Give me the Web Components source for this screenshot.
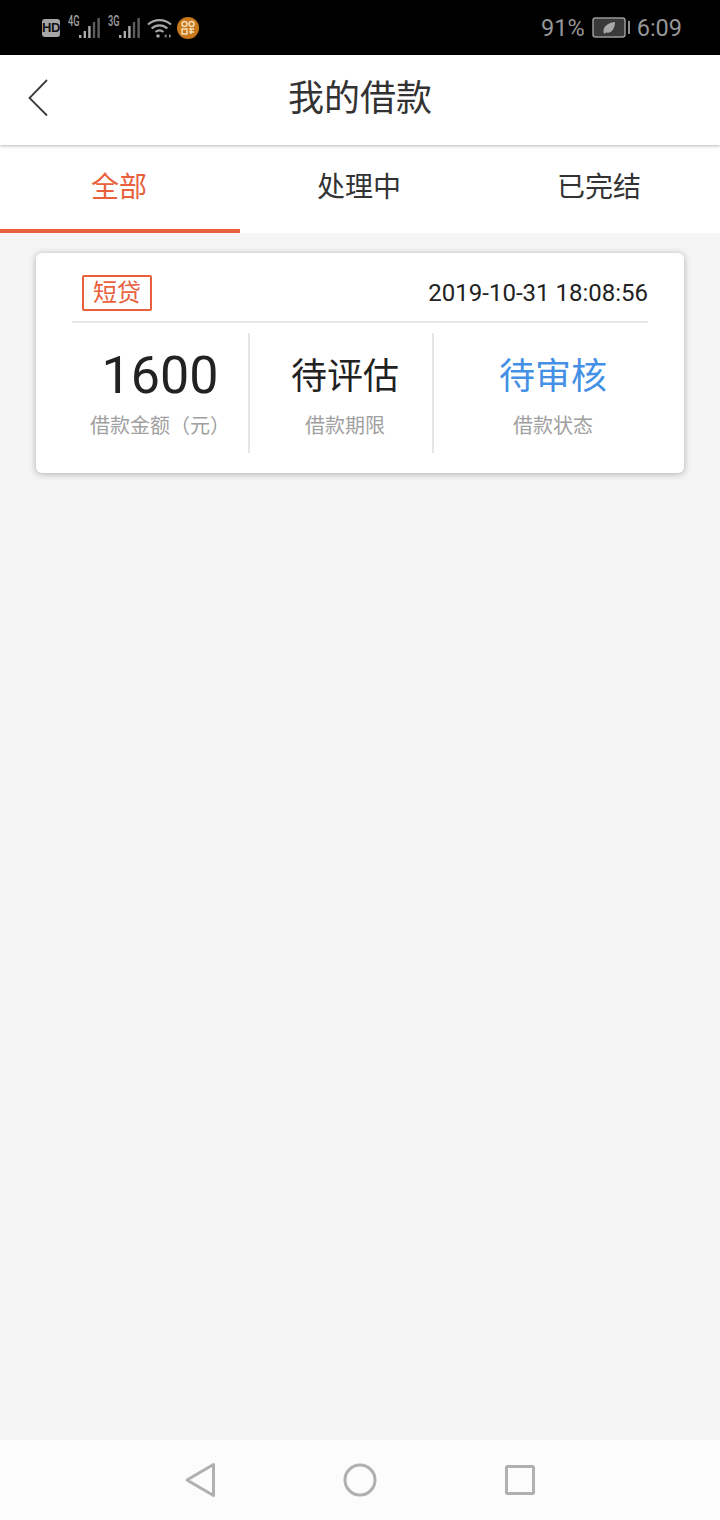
<!DOCTYPE html>
<html lang="zh"><head><meta charset="utf-8"><style>
html,body{margin:0;padding:0;background:#f5f5f5}
body{width:720px;height:1520px;font-family:Roboto,"Noto Sans CJK SC",sans-serif}
</style></head><body>
<app-screen></app-screen>
<script>
function def(name, html){
  customElements.define(name, class extends HTMLElement{
    constructor(){super();this.attachShadow({mode:'open'}).innerHTML=html;}
  });
}
const CJK='Roboto,"Noto Sans CJK SC",sans-serif';
function bars(){return `<svg width="21" height="20" viewBox="0 0 21 20"><g fill="#ababab"><rect x="0" y="17" width="2.400" height="3"/><rect x="4.600" y="13" width="2.400" height="7"/><rect x="9.200" y="8" width="2.400" height="12"/></g><g fill="#5c5c5c"><rect x="13.800" y="4" width="2.400" height="16"/><rect x="18.400" y="0" width="2.400" height="20"/></g></svg>`;}
def('status-bar',`<style>
:host{display:flex;height:55px;background:#000;color:#999;align-items:center;justify-content:space-between;padding:0 38px 0 42px;box-sizing:border-box;font-family:${CJK}}
.l,.r{display:flex;align-items:center}
.hd{width:18px;height:18px;background:#a6a6a6;border-radius:3px;color:#111;font:700 13px/18px "Liberation Sans",sans-serif;text-align:center;margin-top:1px;letter-spacing:-.5px}
.sig{position:relative;width:33px;height:24px;margin-left:8px}
.sig span{font:500 14px/12px Roboto,sans-serif;color:#a0a0a0;position:absolute;left:0;top:-1px;transform:scaleX(.66);transform-origin:left}
.sig svg{position:absolute;left:11px;top:2px}
.sig.b{margin-left:7px}
.wifi{margin-left:6px;margin-top:1px}
.coin{width:22px;height:22px;border-radius:50%;background:#c9781a;margin-left:5px;margin-top:1px;display:flex;align-items:center;justify-content:center}
.t{font-size:23.500px;line-height:28px;color:#969696}
.batt{margin:0 7px}
</style>
<div class="l"><div class="hd">HD</div>
<div class="sig"><span>4G</span>${bars()}</div>
<div class="sig b"><span>3G</span>${bars()}</div>
<svg class="wifi" width="25" height="21" viewBox="0 0 25 21" fill="none" stroke="#a8a8a8" stroke-width="2.200"><path d="M1 6.500C7.500 .6 17.500 .6 24 6.500"/><path d="M4.600 10.500C9.300 6.300 15.700 6.300 20.400 10.500"/><path d="M8.500 14C11 12 14 12 16.500 14"/><circle cx="11" cy="18" r="1.800" fill="#a8a8a8" stroke="none"/><path d="M17 18l2.500-2v4zM24.500 18l-2.500-2v4z" fill="#888" stroke="none"/></svg>
<div class="coin"><svg width="16" height="16" viewBox="0 0 16 16" fill="none" stroke="#f3dcb8" stroke-width="1.500"><circle cx="4.500" cy="4" r="2.500"/><circle cx="11.500" cy="4" r="2.500"/><path d="M2 9h5v5H2zM9 9h5M9 12h5M11 9v5"/></svg></div></div>
<div class="r"><span class="t">91%</span>
<svg class="batt" width="38" height="22" viewBox="0 0 38 22"><rect x="1" y="1" width="32" height="19" rx="2.500" fill="#3a3a3a" stroke="#9a9a9a" stroke-width="1.500"/><rect x="36" y="4" width="2" height="13" fill="#8c8c8c"/><path d="M12 17C10 11 14 6 23 5C23 12 19 17 14 15.500Z" fill="#a8a8a8"/></svg>
<span class="t">6:09</span></div>`);
def('app-header',`<style>
:host{display:flex;position:relative;z-index:1;height:90px;background:#fff;align-items:center;justify-content:center;box-shadow:0 1px 3px rgba(0,0,0,.28);font-family:${CJK}}
svg{position:absolute;left:28px;top:24px}
h1{margin:0;font-weight:400;font-size:36px;line-height:84px;height:86px;color:#333}
</style>
<svg width="20" height="38" viewBox="0 0 20 38" fill="none" stroke="#3c3c3c" stroke-width="1.800"><path d="M19 1L1.500 19L19 36.500"/></svg><h1><slot></slot></h1>`);
def('tab-bar',`<style>:host{display:flex;height:88px;background:#fff}</style><slot></slot>`);
def('tab-item',`<style>
:host{display:block;flex:1;box-sizing:border-box;height:88px;padding-right:2px;text-align:center;font:400 28px/86px ${CJK};color:#333}
:host([active]){color:#e8603c;border-bottom:4px solid #e8603c}
</style><slot></slot>`);
def('loan-card',`<style>
:host{display:block;margin:20px 36px 0;height:220px;background:#fff;border-radius:6px;box-shadow:0 1px 7px rgba(0,0,0,.3);box-sizing:border-box;padding:0 36px;font-family:${CJK}}
.top{height:68px;border-bottom:2px solid #e8e8e8;display:flex;align-items:flex-start;justify-content:space-between}
.badge{margin-left:10px;margin-top:22px;box-sizing:border-box;width:70px;height:36px;border:2px solid #e8603c;border-radius:2px;color:#e8603c;font-size:24px;line-height:32px;text-align:center}
.date{font-size:24px;line-height:32px;color:#222;margin-top:24px}
.cols{display:flex;height:120px;margin-top:10px}
</style>
<div class="top"><div class="badge"><slot name="tag"></slot></div><div class="date"><slot name="date"></slot></div></div>
<div class="cols"><slot></slot></div>`);
def('loan-stat',`<style>
:host{display:flex;flex:none;flex-direction:column;align-items:center;box-sizing:border-box;height:120px;border-right:2px solid #e6e6e6;font-family:${CJK}}
:host(:last-child){border-right:0}
.v{font-size:36px;line-height:44px;margin-top:22px;height:44px;color:#222}
:host([blue]) .v{color:#4390e6}
:host([big]) .v{font-size:52px;margin-top:21px}
.k{font-size:20px;line-height:24px;margin-top:15px;color:#a0a0a0}
:host([big]) .k{margin-top:16px}
</style><div class="v"><slot name="v"></slot></div><div class="k"><slot name="k"></slot></div>`);
def('nav-bar',`<style>
:host{position:absolute;left:0;right:0;top:1440px;height:80px;background:#fcfcfc;display:flex;align-items:center;justify-content:center;gap:112px}
svg{display:block}
</style>
<svg width="48" height="36" viewBox="0 0 48 36" fill="none" stroke="#b0b0b0" stroke-width="3" stroke-linejoin="round"><path d="M37.500 2.500V33.500L11 18Z"/></svg>
<svg width="48" height="36" viewBox="0 0 48 36" fill="none" stroke="#b0b0b0" stroke-width="3"><circle cx="24" cy="18" r="15"/></svg>
<svg width="48" height="36" viewBox="0 0 48 36" fill="none" stroke="#b0b0b0" stroke-width="3" stroke-linejoin="round"><rect x="10.500" y="4.500" width="27" height="27" rx="1"/></svg>`);
def('app-screen',`<style>:host{display:block;position:relative;width:720px;height:1520px;background:#f5f5f5}</style>
<status-bar></status-bar>
<app-header>我的借款</app-header>
<tab-bar><tab-item active>全部</tab-item><tab-item>处理中</tab-item><tab-item>已完结</tab-item></tab-bar>
<loan-card><span slot="tag">短贷</span><span slot="date">2019-10-31 18:08:56</span>
<loan-stat big style="width:178px"><span slot="v">1600</span><span slot="k">借款金额（元）</span></loan-stat>
<loan-stat style="width:184px;padding-left:8px"><span slot="v">待评估</span><span slot="k">借款期限</span></loan-stat>
<loan-stat blue style="width:238px"><span slot="v">待审核</span><span slot="k">借款状态</span></loan-stat>
</loan-card>
<nav-bar></nav-bar>`);
</script></body></html>
